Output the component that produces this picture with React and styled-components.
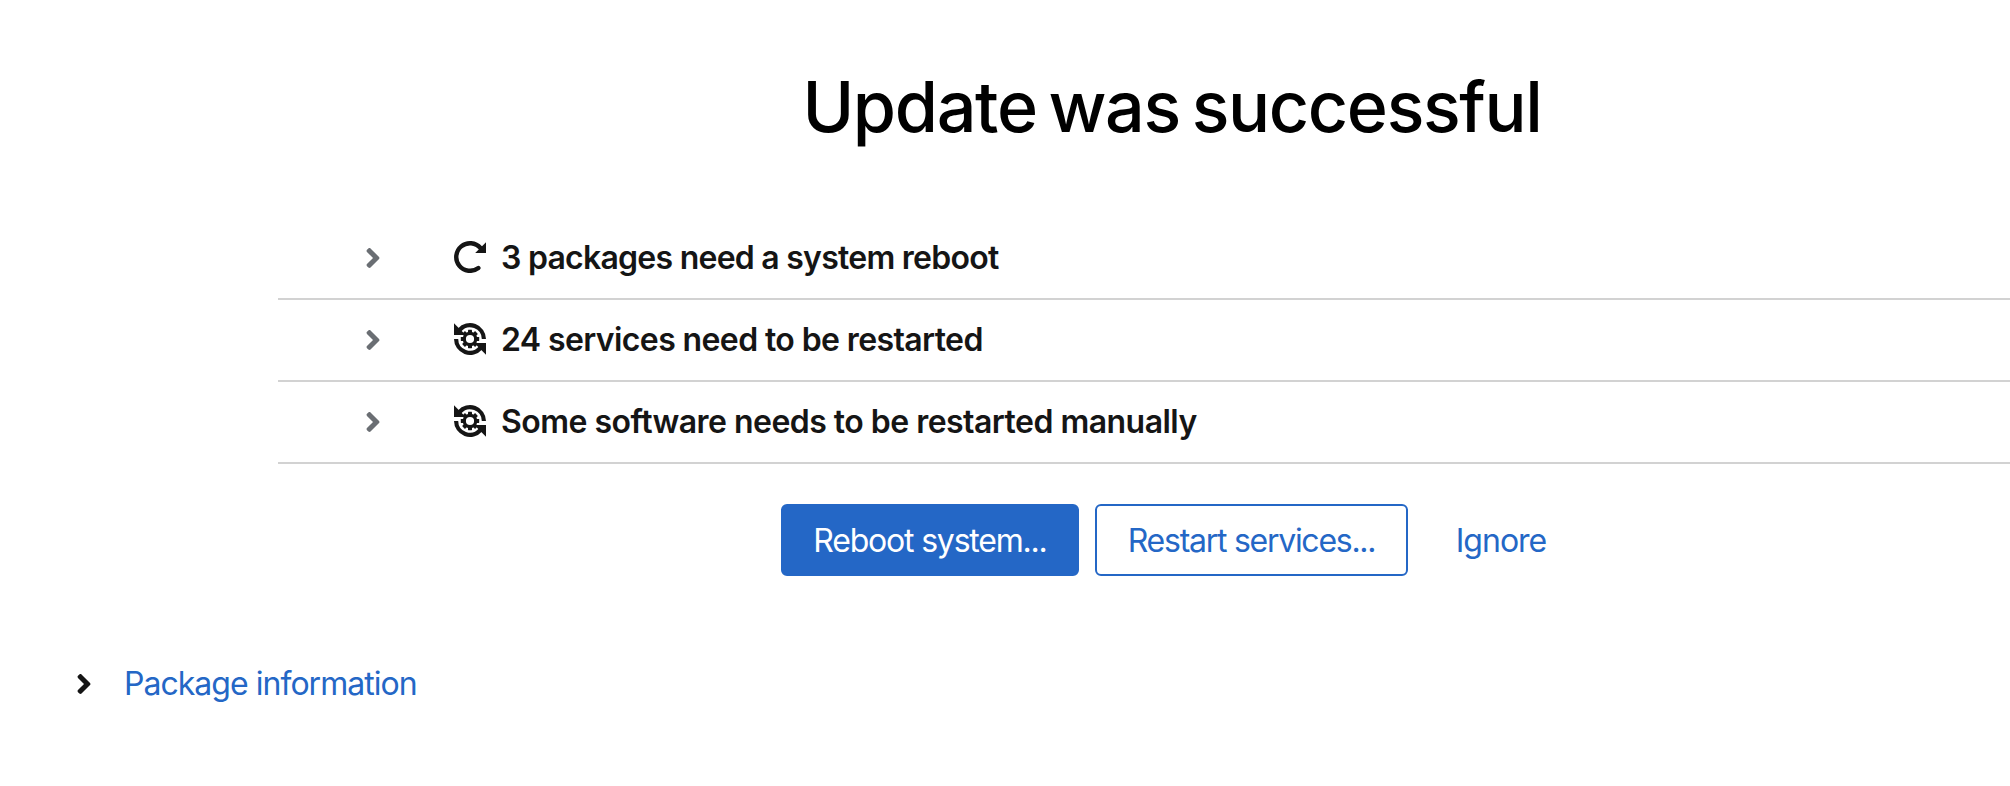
import React from "react";
import styled, { createGlobalStyle } from "styled-components";

const GlobalStyle = createGlobalStyle`
  *, *::before, *::after { box-sizing: border-box; }
  body {
    margin: 0;
    background: #ffffff;
    color: #151515;
    font-family: Inter, "Liberation Sans", sans-serif;
    font-size: 32px;
    line-height: 48px;
    overflow: hidden;
  }
`;

const Page = styled.main`
  display: flex;
  flex-direction: column;
  width: 100%;
  height: 786px;
  overflow: hidden;
`;

const Content = styled.section`
  flex: none;
  width: 1788px;
  margin-left: 278px;
  padding-top: 65px;
`;

const Title = styled.h1`
  margin: 0;
  color: #000000;
  font-size: 70px;
  font-weight: 550;
  line-height: 84px;
  letter-spacing: -1.35px;
  word-spacing: -5.5px;
  text-align: center;
`;

const List = styled.ul`
  display: flex;
  flex-direction: column;
  margin: 69px 0 0;
  padding: 0;
  list-style: none;
`;

const Row = styled.li`
  display: flex;
  align-items: center;
  height: 82px;
  padding-left: 87px;
  border-bottom: 2px solid #d2d2d2;
  font-weight: 600;
`;

const RowIcon = styled.span`
  display: flex;
  margin: 0 15px 2px 73px;
`;

const Label = styled.span`
  white-space: nowrap;
  letter-spacing: ${(p) => p.$tracking}px;
`;

const Actions = styled.div`
  display: flex;
  gap: 16px;
  margin-top: 40px;
  padding-left: 503px;
`;

const Button = styled.button`
  display: flex;
  align-items: center;
  justify-content: center;
  width: ${(p) => p.$width}px;
  height: 72px;
  padding: 1px 0 0;
  border: 2px solid ${(p) => (p.$variant === "link" ? "transparent" : "#2467c6")};
  border-radius: 6px;
  background: ${(p) => (p.$variant === "primary" ? "#2467c6" : "transparent")};
  color: ${(p) => (p.$variant === "primary" ? "#ffffff" : "#2467c6")};
  font: inherit;
  cursor: pointer;
`;

const Toggle = styled.button`
  display: flex;
  align-items: center;
  align-self: flex-start;
  gap: 32px;
  height: 72px;
  margin: 71px 0 0 76px;
  padding: 1px 0 0;
  border: 0;
  background: transparent;
  color: #2467c6;
  font: inherit;
  cursor: pointer;
`;

const Chevron = ({ color }) => (
  <svg width="16" height="32" viewBox="0 0 256 512" fill={color} aria-hidden="true">
    <path d="M224.3 273l-136 136c-9.4 9.4-24.6 9.4-33.9 0l-22.6-22.6c-9.4-9.4-9.4-24.6 0-33.9l96.4-96.4-96.4-96.4c-9.4-9.4-9.4-24.6 0-33.9L54.3 103c9.4-9.4 24.6-9.4 33.9 0l136 136c9.5 9.4 9.5 24.6.1 34z" />
  </svg>
);

const RebootIcon = () => (
  <svg width="32" height="32" viewBox="0 0 32 32" aria-hidden="true">
    <path d="M26.5 7A13.8 13.8 0 1 0 24.4 27" fill="none" stroke="#151515" strokeWidth="4.4" strokeLinecap="round" />
    <path d="M32 1.3V12H21.2Z" fill="#151515" />
  </svg>
);

const RestartIcon = () => (
  <svg width="32" height="32" viewBox="0 0 32 32" aria-hidden="true">
    <g fill="none" stroke="#151515" strokeWidth="4.2">
      <path d="M5.5 7A13.9 13.9 0 0 1 29.9 16" />
      <path d="M26.5 25A13.9 13.9 0 0 1 2.1 16" />
    </g>
    <path d="M0 .3V12H11.7ZM32 31.7V20H20.3Z" fill="#151515" />
    <circle cx="16" cy="16" r="5.7" fill="none" stroke="#151515" strokeWidth="3.2" />
    <g fill="#151515">
      {[0, 45, 90, 135, 180, 225, 270, 315].map((angle) => (
        <rect key={angle} x="14" y="6.8" width="4" height="3.6" rx="0.4" transform={`rotate(${angle} 16 16)`} />
      ))}
    </g>
  </svg>
);

const rows = [
  { icon: RebootIcon, text: "3 packages need a system reboot", tracking: -0.75 },
  { icon: RestartIcon, text: "24 services need to be restarted", tracking: -0.61 },
  { icon: RestartIcon, text: "Some software needs to be restarted manually", tracking: -0.53 },
];

const actions = [
  { text: "Reboot system...", variant: "primary", width: 298, tracking: -1.2 },
  { text: "Restart services...", variant: "secondary", width: 313, tracking: -1.27 },
  { text: "Ignore", variant: "link", width: 154, tracking: -1 },
];

export default function App() {
  return (
    <Page>
      <GlobalStyle />
      <Content>
        <Title>Update was successful</Title>
        <List>
          {rows.map(({ icon: Icon, text, tracking }) => (
            <Row key={text}>
              <Chevron color="#6a6e73" />
              <RowIcon><Icon /></RowIcon>
              <Label $tracking={tracking}>{text}</Label>
            </Row>
          ))}
        </List>
        <Actions>
          {actions.map(({ text, variant, width, tracking }) => (
            <Button key={text} $variant={variant} $width={width}>
              <Label $tracking={tracking}>{text}</Label>
            </Button>
          ))}
        </Actions>
      </Content>
      <Toggle>
        <Chevron color="#151515" />
        <Label $tracking={-0.97}>Package information</Label>
      </Toggle>
    </Page>
  );
}
